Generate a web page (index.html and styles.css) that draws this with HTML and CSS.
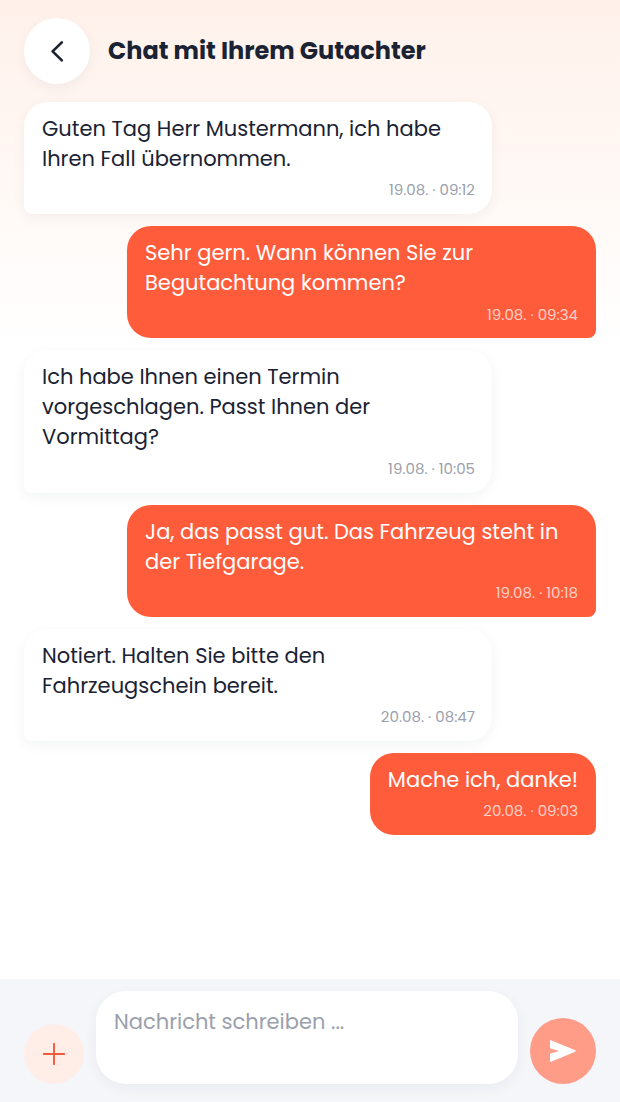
FILE: index.html
```html
<!DOCTYPE html>
<html lang="de">
<head>
<meta charset="utf-8">
<title>Chat</title>
<link rel="stylesheet" href="styles.css">
</head>
<body>
<div class="app">
  <header class="header">
    <button class="back" aria-label="Zurück">
      <svg width="24" height="24" viewBox="0 0 24 24" fill="none" stroke="#1a2233" stroke-width="2.7" stroke-linecap="round" stroke-linejoin="round"><path d="M16.8 3.4 L7.6 12.4 L16.8 21.4"/></svg>
    </button>
    <h1 class="title">Chat mit Ihrem Gutachter</h1>
  </header>
  <main class="messages">
    <div class="msg in"><p class="text">Guten Tag Herr Mustermann, ich habe Ihren Fall übernommen.</p><div class="time">19.08. · 09:12</div></div>
    <div class="msg out"><p class="text">Sehr gern. Wann können Sie zur Begutachtung kommen?</p><div class="time">19.08. · 09:34</div></div>
    <div class="msg in"><p class="text">Ich habe Ihnen einen Termin vorgeschlagen. Passt Ihnen der Vormittag?</p><div class="time">19.08. · 10:05</div></div>
    <div class="msg out"><p class="text">Ja, das passt gut. Das Fahrzeug steht in der Tiefgarage.</p><div class="time">19.08. · 10:18</div></div>
    <div class="msg in"><p class="text">Notiert. Halten Sie bitte den Fahrzeugschein bereit.</p><div class="time">20.08. · 08:47</div></div>
    <div class="msg out"><p class="text">Mache ich, danke!</p><div class="time">20.08. · 09:03</div></div>
  </main>
  <footer class="composer">
    <button class="plus" aria-label="Anhang">
      <svg width="24" height="24" viewBox="0 0 24 24" fill="none" stroke="#f25a3c" stroke-width="1.9" stroke-linecap="round"><path d="M12 1.8 V22.2 M1.8 12 H22.2"/></svg>
    </button>
    <div class="input">Nachricht schreiben ...</div>
    <button class="send" aria-label="Senden">
      <svg width="28" height="24" viewBox="0 0 28 24" fill="#fff" stroke="#fff" stroke-width="1.4" stroke-linejoin="round"><path d="M1.7 1.8 L26 12 L1.7 22.2 L1.7 15.2 L13 12 L1.7 8.8 Z"/></svg>
    </button>
  </footer>
</div>
</body>
</html>
```
FILE: styles.css
```css
* { box-sizing: border-box; }
html, body { margin: 0; height: 100%; }
body { font-family: "Poppins", "Open Sans", "Noto Sans", sans-serif; color: #1a2233; }
.app {
  width: 620px; height: 1102px; display: flex; flex-direction: column;
  background: linear-gradient(180deg, #fff1ea 0, #ffffff 350px);
}
.header { display: flex; gap: 18px; padding: 18px 24px 0; height: 102px; align-items: flex-start; }
.back { width: 66px; height: 66px; border: 0; border-radius: 50%; background: #fff; display: flex; align-items: center; justify-content: center; padding: 0; box-shadow: 0 4px 14px rgba(26,34,51,.05); }
.title { margin: 0; font-size: 24px; line-height: 66px; font-weight: 700; }
.messages { flex: 1; display: flex; flex-direction: column; gap: 12px; padding: 0 24px; }
.msg { padding: 12px 18px 14px; }
.msg.in { width: 468px; padding-right: 17px; align-self: flex-start; background: #fff; border-radius: 24px 24px 24px 8px; box-shadow: 0 4px 14px rgba(26,34,51,.05); }
.msg.out { max-width: 469px; align-self: flex-end; background: #ff5c3c; color: #fff; border-radius: 24px 24px 8px 24px; }
.text { margin: 0; font-size: 21px; line-height: 30px; }
.time { margin-top: 6.4px; text-align: right; font-size: 15px; line-height: 19.8px; color: #9aa0ac; }
.out .time { color: rgba(255,255,255,.72); }
.composer { height: 123px; background: #f5f6fa; display: flex; align-items: flex-end; gap: 12px; padding: 12px 24px 18px; }
.plus { width: 60px; height: 60px; border: 0; padding: 0; border-radius: 50%; background: #ffeee8; display: flex; align-items: center; justify-content: center; }
.input { width: 422px; height: 93px; background: #fff; border-radius: 30px; padding: 15px 18px; font-size: 21px; line-height: 32px; color: #9aa0ac; box-shadow: 0 4px 14px rgba(26,34,51,.05); }
.send { width: 66px; height: 66px; border: 0; padding: 0; border-radius: 50%; background: #ff9c88; display: flex; align-items: center; justify-content: center; }
```
